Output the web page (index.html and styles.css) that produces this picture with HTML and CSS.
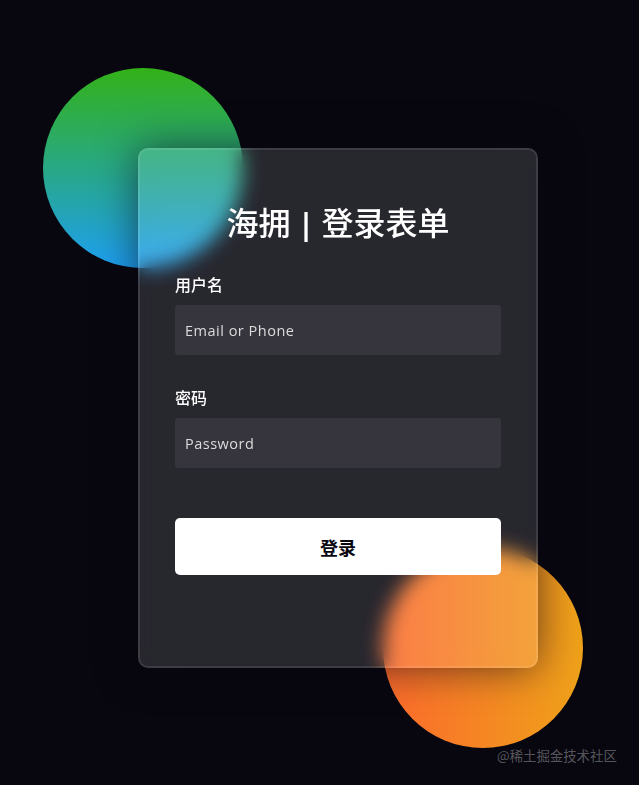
FILE: index.html
```html
<!DOCTYPE html>
<html lang="zh-CN">
<head>
<meta charset="utf-8">
<title>海拥 | 登录表单</title>
<link rel="stylesheet" href="styles.css">
</head>
<body>
<div class="background">
  <div class="shape shape-green"></div>
  <div class="shape shape-orange"></div>
</div>
<form class="login">
  <h3 class="title">海拥 <span class="title-bar">|</span> 登录表单</h3>
  <label class="field-label" for="username">用户名</label>
  <input class="field-input" type="text" placeholder="Email or Phone" id="username">
  <label class="field-label" for="password">密码</label>
  <input class="field-input" type="password" placeholder="Password" id="password">
  <button class="submit" type="button">登录</button>
</form>
<div class="watermark">@稀土掘金技术社区</div>
</body>
</html>
```
FILE: styles.css
```css
*,
*::before,
*::after {
  box-sizing: border-box;
  margin: 0;
  padding: 0;
}

html,
body {
  width: 100%;
  height: 100%;
}

body {
  background: #080710;
  overflow: hidden;
  font-family: "Open Sans", "Noto Sans CJK SC", sans-serif;
}

.background {
  position: absolute;
  width: 430px;
  height: 520px;
  left: 123px;
  top: 148px;
}

.shape {
  position: absolute;
  width: 200px;
  height: 200px;
  border-radius: 50%;
}

.shape-green {
  left: -80px;
  top: -80px;
  background: linear-gradient(#33b118, #1e9ff2);
}

.shape-orange {
  right: -30px;
  bottom: -80px;
  background: linear-gradient(to right, #fb6a2c, #efa21a);
}

.login {
  position: absolute;
  left: 138px;
  top: 148px;
  width: 400px;
  height: 520px;
  background-color: rgba(255, 255, 255, 0.13);
  border-radius: 10px;
  backdrop-filter: blur(10px);
  -webkit-backdrop-filter: blur(10px);
  border: 2px solid rgba(255, 255, 255, 0.1);
  box-shadow: 0 0 40px rgba(8, 7, 16, 0.6);
  padding: 50px 35px;
  color: #ffffff;
  display: flex;
  flex-direction: column;
}

.title {
  font-family: "Noto Sans CJK SC", "Open Sans", sans-serif;
  font-size: 32px;
  font-weight: 500;
  line-height: 42px;
  height: 42px;
  text-align: center;
  word-spacing: 0;
}

.title-bar {
  font-family: "Open Sans", sans-serif;
  font-weight: 700;
  font-size: 30px;
  line-height: 0;
}

.field-label {
  display: block;
  margin-top: 30px;
  font-family: "Noto Sans CJK SC", sans-serif;
  font-size: 16px;
  font-weight: 500;
  line-height: 25px;
}

.field-input {
  display: block;
  height: 50px;
  width: 100%;
  background-color: rgba(255, 255, 255, 0.07);
  border: none;
  outline: none;
  border-radius: 3px;
  padding: 0 10px;
  margin-top: 8px;
  font-family: "Open Sans", sans-serif;
  font-size: 14.5px;
  font-weight: 400;
  letter-spacing: 0.5px;
  color: #ffffff;
}

.field-input::placeholder {
  color: #dcdcdc;
}

.submit {
  margin-top: 50px;
  width: 100%;
  height: 57px;
  background-color: #ffffff;
  color: #080710;
  border: none;
  border-radius: 5px;
  font-family: "Noto Sans CJK SC", sans-serif;
  font-size: 18px;
  font-weight: 700;
  cursor: pointer;
}

.watermark {
  position: absolute;
  left: 497px;
  top: 746px;
  font-family: "Noto Sans CJK SC", sans-serif;
  font-size: 13.4px;
  line-height: 18px;
  color: rgba(255, 255, 255, 0.32);
  white-space: nowrap;
}
```
